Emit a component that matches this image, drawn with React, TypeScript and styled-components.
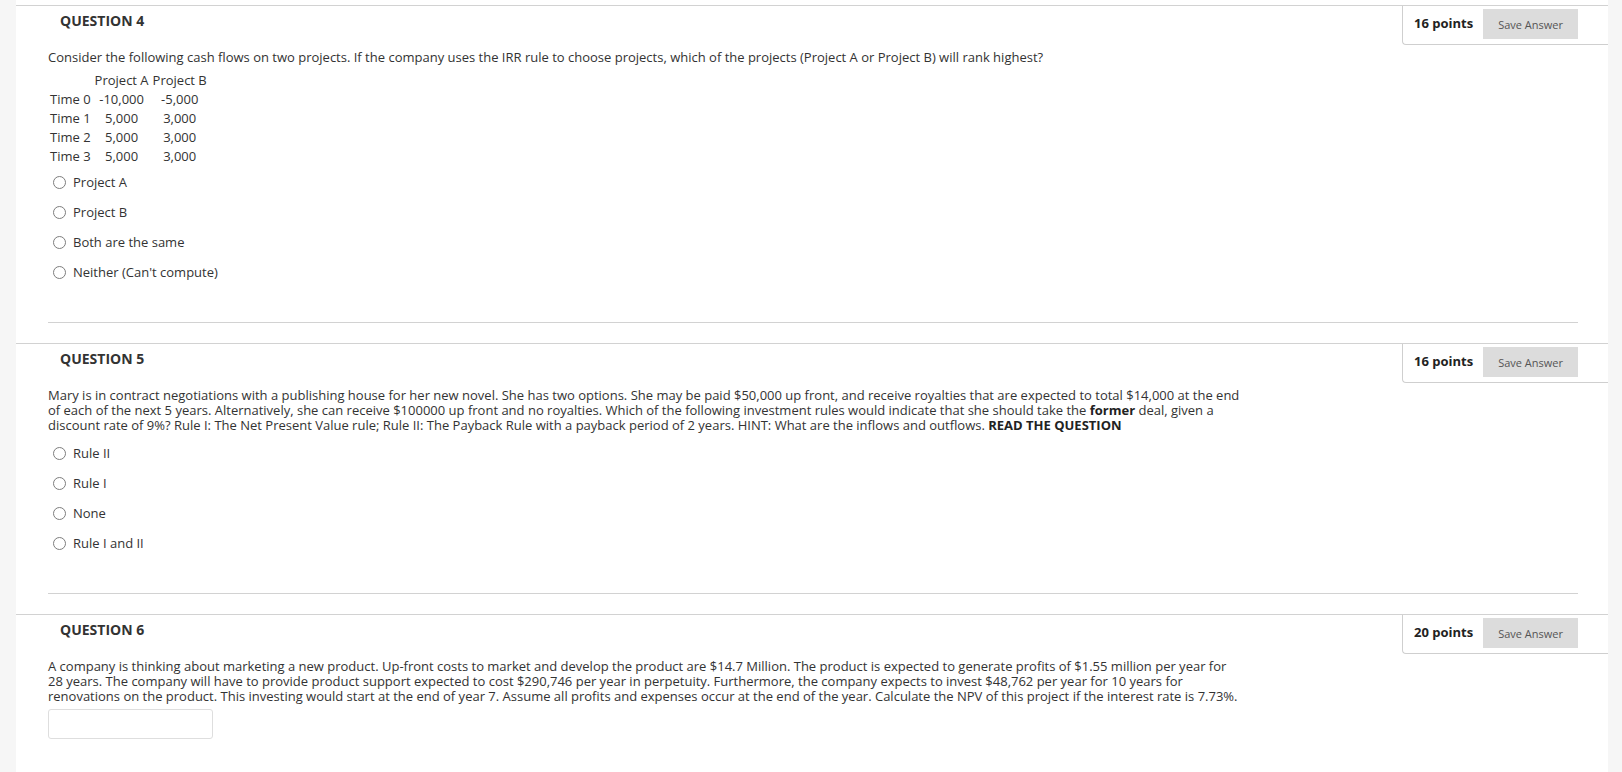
import React from "react";
import styled, { createGlobalStyle } from "styled-components";

type CashRow = { label: string; a: string; b: string };

type QuestionData = {
  number: number;
  points: number;
  prompt: React.ReactNode;
  table?: CashRow[];
  options?: string[];
  textAnswer?: boolean;
  last?: boolean;
};

const cashRows: CashRow[] = [
  { label: "Time 0", a: "-10,000", b: "-5,000" },
  { label: "Time 1", a: "5,000", b: "3,000" },
  { label: "Time 2", a: "5,000", b: "3,000" },
  { label: "Time 3", a: "5,000", b: "3,000" },
];

const questions: QuestionData[] = [
  {
    number: 4,
    points: 16,
    prompt:
      "Consider the following cash flows on two projects. If the company uses the IRR rule to choose projects, which of the projects (Project A or Project B) will rank highest?",
    table: cashRows,
    options: ["Project A", "Project B", "Both are the same", "Neither (Can't compute)"],
  },
  {
    number: 5,
    points: 16,
    prompt: (
      <>
        Mary is in contract negotiations with a publishing house for her new novel. She has two options. She may be
        paid $50,000 up front, and receive royalties that are expected to total $14,000 at the end of each of the next
        5 years. Alternatively, she can receive $100000 up front and no royalties. Which of the following investment
        rules would indicate that she should take the <b>former</b> deal, given a discount rate of 9%? Rule I: The Net
        Present Value rule; Rule II: The Payback Rule with a payback period of 2 years. HINT: What are the inflows and
        outflows. <b>READ THE QUESTION</b>
      </>
    ),
    options: ["Rule II", "Rule I", "None", "Rule I and II"],
  },
  {
    number: 6,
    points: 20,
    prompt:
      "A company is thinking about marketing a new product. Up-front costs to market and develop the product are $14.7 Million. The product is expected to generate profits of $1.55 million per year for 28 years. The company will have to provide product support expected to cost $290,746 per year in perpetuity. Furthermore, the company expects to invest $48,762 per year for 10 years for renovations on the product. This investing would start at the end of year 7. Assume all profits and expenses occur at the end of the year. Calculate the NPV of this project if the interest rate is 7.73%.",
    textAnswer: true,
    last: true,
  },
];

const Question = ({ q }: { q: QuestionData }) => (
  <StyledQuestion>
    <StyledHeader>
      <StyledHeading>QUESTION {q.number}</StyledHeading>
      <StyledPointsBox>
        <StyledPoints>{q.points} points</StyledPoints>
        <StyledSaveButton type="button">Save Answer</StyledSaveButton>
      </StyledPointsBox>
    </StyledHeader>
    <StyledBody>
      <StyledPrompt>{q.prompt}</StyledPrompt>
      {q.table && (
        <StyledCashTable>
          <tbody>
            <tr>
              <td></td>
              <td>Project A</td>
              <td>Project B</td>
            </tr>
            {q.table.map((row) => (
              <tr key={row.label}>
                <td>{row.label}</td>
                <td>{row.a}</td>
                <td>{row.b}</td>
              </tr>
            ))}
          </tbody>
        </StyledCashTable>
      )}
      {q.options && (
        <StyledOptionList>
          {q.options.map((opt) => (
            <StyledOption key={opt}>
              <StyledRadio type="radio" name={`q${q.number}`} />
              <span>{opt}</span>
            </StyledOption>
          ))}
        </StyledOptionList>
      )}
      {q.textAnswer && <StyledAnswerInput type="text" />}
      {!q.last && <StyledDivider />}
    </StyledBody>
  </StyledQuestion>
);

const App = () => {
  return (
    <>
      <GlobalStyle />
      <StyledPage>
        {questions.map((q) => (
          <Question key={q.number} q={q} />
        ))}
      </StyledPage>
    </>
  );
};

const GlobalStyle = createGlobalStyle`
  html, body {
    margin: 0;
    padding: 0;
    background: #f6f6f6;
  }
  body {
    font-family: "Open Sans", "Liberation Sans", Arial, sans-serif;
    color: #333;
  }
`;

const StyledPage = styled.main`
  margin: 0 14px 0 16px;
  padding-top: 5px;
  min-height: 767px;
  background: #fff;
`;

const StyledQuestion = styled.section`
  border-top: 1px solid #d2d2d2;
`;

const StyledHeader = styled.div`
  display: flex;
  justify-content: space-between;
  align-items: flex-start;
`;

const StyledHeading = styled.h3`
  margin: 0;
  padding: 5px 0 0 44px;
  font-size: 14px;
  font-weight: 700;
  line-height: 20px;
  color: #333;
`;

const StyledPointsBox = styled.div`
  display: flex;
  align-items: center;
  gap: 10px;
  padding: 3px 30px 5px 11px;
  border-left: 1px solid #cfcfcf;
  border-bottom: 1px solid #cfcfcf;
  border-bottom-left-radius: 4px;
`;

const StyledPoints = styled.span`
  font-size: 13px;
  font-weight: 700;
  line-height: 17px;
  padding-bottom: 1px;
  color: #222;
`;

const StyledSaveButton = styled.button`
  height: 30px;
  padding: 0 15px;
  border: none;
  background: #dcdcdc;
  color: #555;
  font-family: "Open Sans", "Liberation Sans", Arial, sans-serif;
  font-size: 11px;
  cursor: pointer;
`;

const StyledBody = styled.div`
  padding: 5px 30px 0 32px;
`;

const StyledPrompt = styled.p`
  margin: 0 0 5px;
  max-width: 1196px;
  font-size: 13px;
  line-height: 15px;
  color: #333;

  b {
    font-weight: 700;
    color: #222;
  }
`;

const StyledCashTable = styled.table`
  border-collapse: collapse;
  margin-bottom: 1px;
  font-size: 13px;
  color: #333;

  td {
    height: 19px;
    padding: 0 2px;
    line-height: 19px;
    text-align: center;
    white-space: nowrap;
  }
  tr:first-child td {
    height: 20px;
    line-height: 18px;
  }
  td:first-child {
    text-align: left;
  }
`;

const StyledOptionList = styled.ul`
  list-style: none;
  margin: 0;
  padding: 0;
`;

const StyledOption = styled.li`
  display: flex;
  align-items: center;
  gap: 7px;
  height: 30px;
  padding-left: 5px;
  font-size: 13px;
  color: #333;
`;

const StyledRadio = styled.input`
  appearance: none;
  width: 13px;
  height: 13px;
  margin: 0;
  border: 1px solid #7d7d7d;
  border-radius: 50%;
  background: #fff;
`;

const StyledAnswerInput = styled.input`
  display: block;
  box-sizing: border-box;
  width: 165px;
  height: 30px;
  margin: 0;
  border: 1px solid #dedede;
  border-radius: 3px;
`;

const StyledDivider = styled.hr`
  margin: 35px 0 20px;
  border: 0;
  border-top: 1px solid #d2d2d2;
`;

export default App;
